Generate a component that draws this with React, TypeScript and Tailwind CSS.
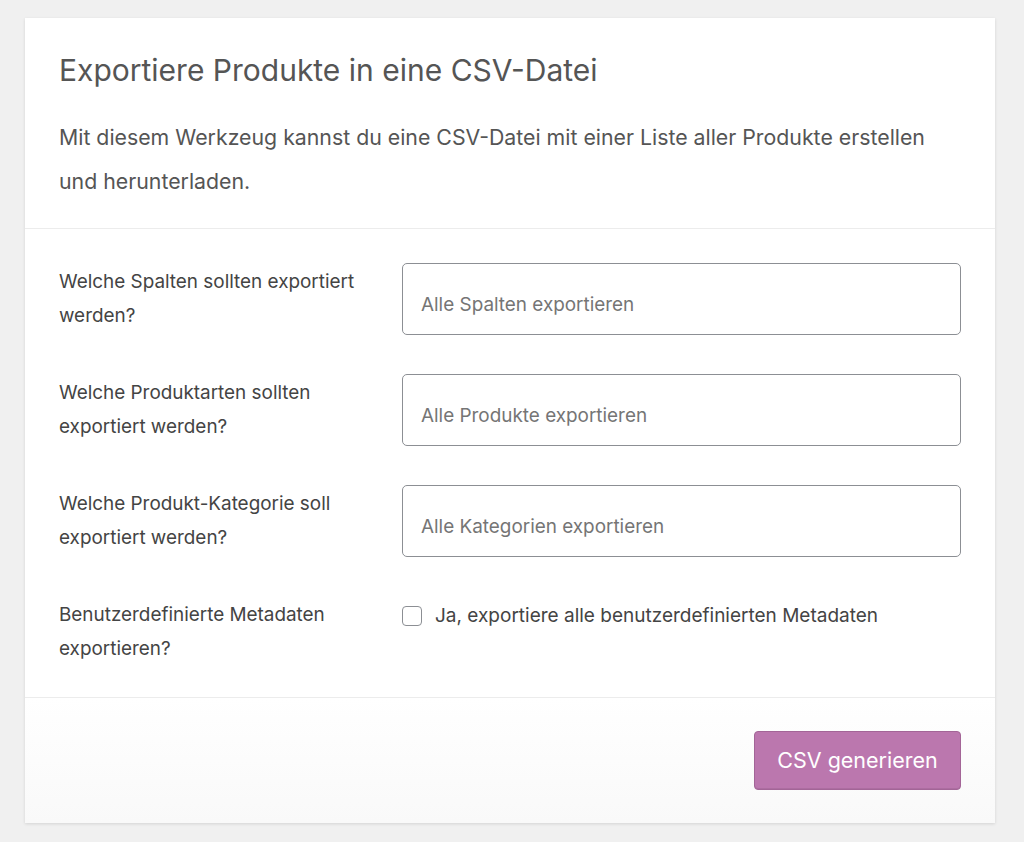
import React, { useState } from "react";

const rows = [
  { label: "Welche Spalten sollten exportiert werden?", placeholder: "Alle Spalten exportieren" },
  { label: "Welche Produktarten sollten exportiert werden?", placeholder: "Alle Produkte exportieren" },
  { label: "Welche Produkt-Kategorie soll exportiert werden?", placeholder: "Alle Kategorien exportieren" },
];

const App = () => {
  const [meta, setMeta] = useState(false);

  return (
    <div className="min-h-[842px] bg-[#f0f0f0] px-[25px] pt-[18px] pb-[20px] font-['Inter','Liberation_Sans',sans-serif]">
      <div className="w-[970px] bg-white shadow-[0_1px_3px_rgba(0,0,0,0.12)]">
        <div className="px-[34px] pt-[35px] pb-[25px] border-b border-[#ececec]">
          <h1 className="text-[30px] leading-[34px] text-[#555] font-normal">
            Exportiere Produkte in eine CSV-Datei
          </h1>
          <p className="mt-[28px] text-[21.3px] leading-[44px] text-[#555]">
            Mit diesem Werkzeug kannst du eine CSV-Datei mit einer Liste aller Produkte erstellen und herunterladen.
          </p>
        </div>

        <div className="px-[34px] pt-[34px] pb-[31px] flex flex-col gap-[39px] border-b border-[#ececec]">
          {rows.map((row) => (
            <div key={row.label} className="flex items-start">
              <label className="w-[343px] shrink-0 pr-[23px] pt-[2px] text-[18.9px] leading-[34px] text-[#444]">
                {row.label}
              </label>
              <div className="flex-1 h-[72px] rounded-[5px] border border-[#8c8f94] flex items-center px-[18px] pt-[12px] text-[18.9px] text-[#757575]">
                {row.placeholder}
              </div>
            </div>
          ))}
          <div className="flex items-start">
            <label className="w-[343px] shrink-0 pr-[23px] pt-[2px] text-[18.9px] leading-[34px] text-[#444]">
              Benutzerdefinierte Metadaten exportieren?
            </label>
            <label className="flex items-center gap-[13px] pt-[3px] text-[19px] leading-[34px] text-[#444] cursor-pointer">
              <span
                onClick={() => setMeta(!meta)}
                className="w-[20px] h-[20px] rounded-[4px] border border-[#8c8f94] bg-white flex items-center justify-center text-[13px] text-[#bb77ae]"
              >
                {meta ? "✓" : ""}
              </span>
              Ja, exportiere alle benutzerdefinierten Metadaten
            </label>
          </div>
        </div>

        <div className="h-[125px] bg-gradient-to-b from-white to-[#f9f9f9] px-[34px] flex items-center justify-end">
          <button className="w-[207px] h-[59px] rounded-[4px] bg-[#bb77ae] border border-[#a36597] text-white text-[21.5px] shadow-[inset_0_-1px_0_rgba(0,0,0,0.08)]">
            CSV generieren
          </button>
        </div>
      </div>
    </div>
  );
};

export default App;
